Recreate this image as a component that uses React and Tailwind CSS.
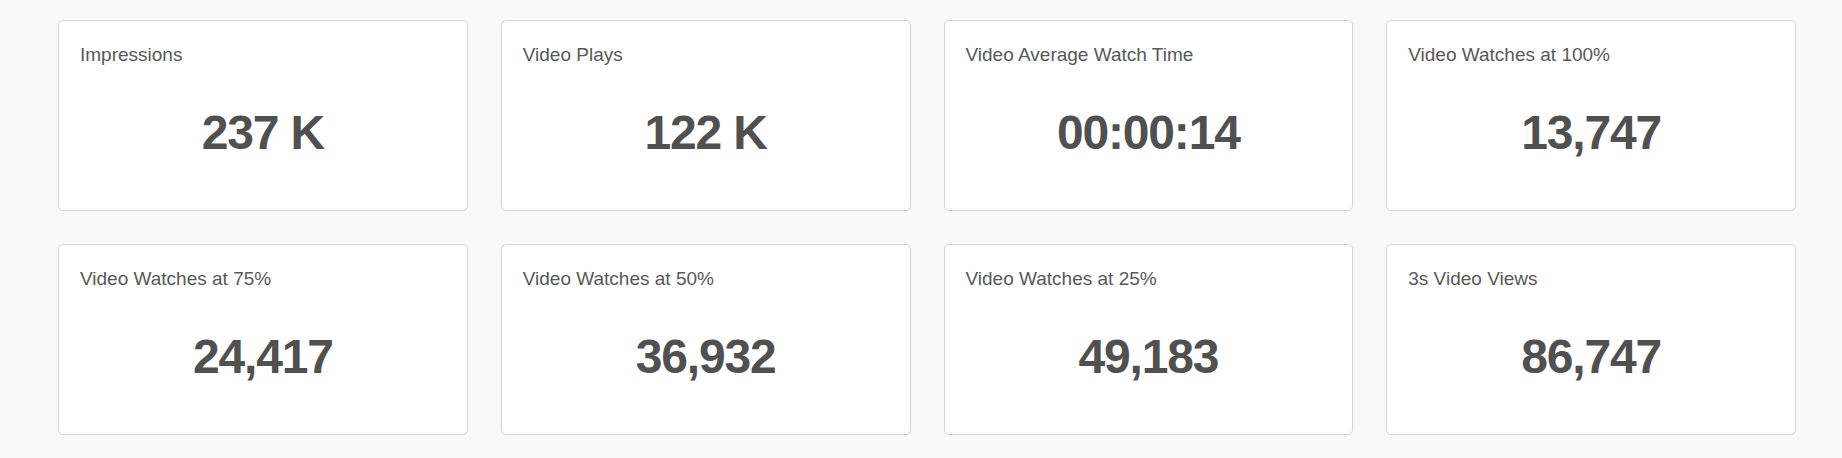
const stats = [
  { label: 'Impressions', value: '237 K' },
  { label: 'Video Plays', value: '122 K' },
  { label: 'Video Average Watch Time', value: '00:00:14' },
  { label: 'Video Watches at 100%', value: '13,747' },
  { label: 'Video Watches at 75%', value: '24,417' },
  { label: 'Video Watches at 50%', value: '36,932' },
  { label: 'Video Watches at 25%', value: '49,183' },
  { label: '3s Video Views', value: '86,747' },
]

function StatCard({ label, value }) {
  return (
    <div className="h-[191px] bg-white border border-[#d4d4d4] rounded-[5px] px-[21px] pt-[23px]">
      <div className="text-[19px] leading-[1.2] text-[#585858]">{label}</div>
      <div className="mt-[42px] text-center text-[48px] leading-none font-bold tracking-tight text-[#505050]">
        {value}
      </div>
    </div>
  )
}

export default function App() {
  return (
    <div
      className="min-h-[458px] bg-[#f9f9f9] pl-[58px] pr-[46px] pt-[20px] pb-[22px]"
      style={{ fontFamily: '"Liberation Sans", Arial, sans-serif' }}
    >
      <div className="grid grid-cols-4 gap-[33px]">
        {stats.map((s, i) => (
          <StatCard key={i} label={s.label} value={s.value} />
        ))}
      </div>
    </div>
  )
}
